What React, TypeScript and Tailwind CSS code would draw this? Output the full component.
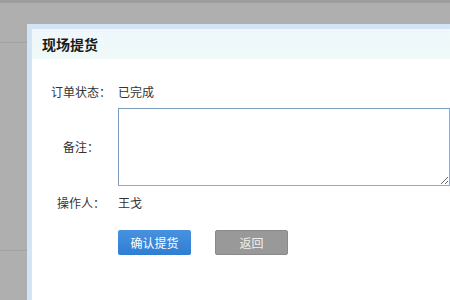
import React from "react";

export default function App() {
  const font = { fontFamily: '"Noto Sans CJK SC", "Noto Sans", sans-serif' };
  return (
    <div className="relative w-[450px] h-[300px] overflow-hidden bg-[#afafaf]" style={font}>
      <div className="h-[3px] bg-[#9d9d9d]" />
      <div className="h-[39px]" />
      <div className="h-px bg-[#a3a3a3]" />
      <div className="h-[207px]" />
      <div className="h-px bg-[#a3a3a3]" />

      <div className="absolute left-[27px] top-[24px] w-[600px] h-[400px] border-[5px] border-[#d3e5f5] bg-white flex flex-col">
        <div className="h-[30px] flex items-center pl-[10px] bg-gradient-to-b from-[#eff7fb] to-[#f0faf8]">
          <span className="text-[14px] font-bold text-[#1a1a1a]">现场提货</span>
        </div>
        <div className="flex flex-col pl-[12px] text-[12px] text-[#333]">
          <div className="mt-[23px] h-[20px] flex items-center">
            <span className="w-[74px] text-center">订单状态：</span>
            <span>已完成</span>
          </div>
          <div className="mt-[6px] flex items-center">
            <span className="w-[74px] text-center">备注：</span>
            <textarea className="w-[332px] h-[78px] border border-[#8eabc9] border-t-[#7b9bbd] border-l-[#7b9bbd] bg-white outline-none" />
          </div>
          <div className="mt-[7px] h-[20px] flex items-center">
            <span className="w-[74px] text-center">操作人：</span>
            <span>王戈</span>
          </div>
          <div className="mt-[17px] flex items-center pl-[74px] gap-[24px]">
            <button className="w-[73px] h-[25px] rounded-[2px] bg-gradient-to-b from-[#4791e0] to-[#2f7ed3] text-white text-[12px]">
              确认提货
            </button>
            <button className="w-[73px] h-[25px] rounded-[2px] bg-[#999] border border-[#8a8a8a] text-[#f0f0f0] text-[12px]">
              返回
            </button>
          </div>
        </div>
      </div>
    </div>
  );
}
